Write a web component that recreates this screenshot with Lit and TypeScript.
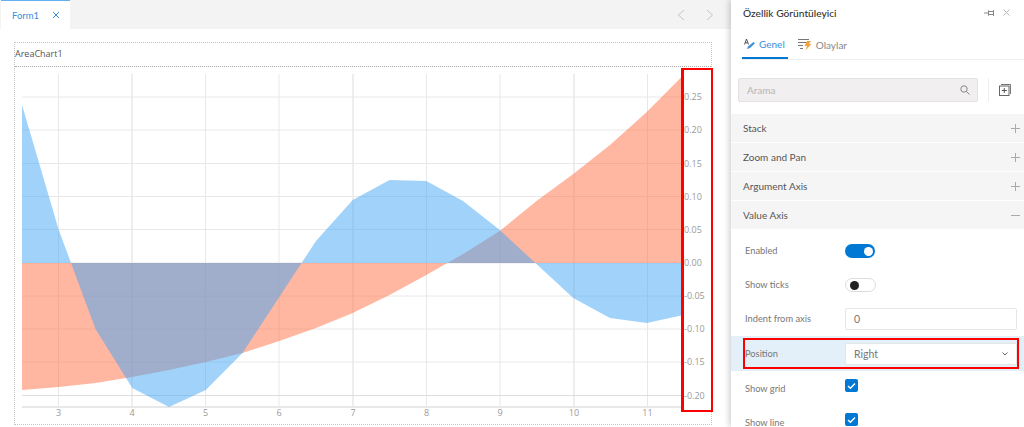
import { LitElement, html, svg, css } from 'lit';
import { customElement } from 'lit/decorators.js';

// page coordinates of the plot: x for 2.5, 3, 3.5 ... 11.5
const xs = Array.from({ length: 19 }, (_, i) => 22 + i * 36.75);
const blue = [105, 230, 329, 388, 407, 390, 353, 297, 241, 200, 180, 181, 201, 230, 264, 298, 318, 323, 315];
const orange = [390, 387, 383, 377, 370, 362, 353, 341, 328, 313, 295, 275, 254, 231, 201, 174, 145, 112, 75];
const baseY = 263;

const areaPoints = (ys: number[]) =>
  `22,${baseY} ` + ys.map((y, i) => `${xs[i]},${y}`).join(' ') + ` ${xs[18]},${baseY}`;

const gridX = [58.5, 132, 205.5, 279, 353, 426.5, 500, 574, 647.5];
const gridY = [97, 130, 163.5, 196.5, 229.5, 263, 296, 329, 362, 395.5];
const valueLabels = ['0.25', '0.20', '0.15', '0.10', '0.05', '0.00', '-0.05', '-0.10', '-0.15', '-0.20'];

@customElement('area-chart')
class AreaChart extends LitElement {
  static styles = css`
    :host {
      display: block;
    }

    svg {
      display: block;
    }

    text {
      font-family: 'Open Sans', sans-serif;
      font-size: 9px;
      fill: #9a9a9a;
    }
  `;

  render() {
    return html`<svg width="696" height="357" viewBox="15 67 696 357">
      ${gridX.map(
        (x, i) => svg`
          <line x1=${x} x2=${x} y1="74" y2="407" stroke="#e8e8e8" stroke-width=${i % 3 === 1 ? 1.5 : 1}></line>
          <text x=${x} y="416" text-anchor="middle">${i + 3}</text>
        `,
      )}
      ${gridY.map(
        (y, i) => svg`
          <line x1="22" x2="684" y1=${y} y2=${y} stroke=${i === 9 ? '#dedede' : '#e8e8e8'}></line>
          <text x="684" y=${y + 3}>${valueLabels[i]}</text>
        `,
      )}
      <line x1="22" x2="684" y1="407" y2="407" stroke="#e8e8e8" stroke-width="2"></line>
      <polygon points=${areaPoints(orange)} fill="#ff7043" fill-opacity="0.5"></polygon>
      <polygon points=${areaPoints(blue)} fill="#42a5f5" fill-opacity="0.5"></polygon>
    </svg>`;
  }
}

@customElement('app-root')
export default class AppRoot extends LitElement {
  static styles = css`
    :host {
      display: block;
      width: 1024px;
      height: 427px;
      overflow: hidden;
      font-family: Lato, 'Open Sans', sans-serif;
      color: #444;
    }

    .app {
      display: flex;
      height: 427px;
      position: relative;
    }

    .designer {
      width: 731px;
      flex: none;
      background: #fff;
    }

    .tabbar {
      display: flex;
      align-items: stretch;
      height: 29px;
      background: #f3f3f3;
      padding-left: 1px;
    }

    .tab {
      display: flex;
      align-items: center;
      gap: 13px;
      width: 69px;
      box-sizing: border-box;
      padding-left: 11px;
      background: #fff;
      border-top: 1px solid #64b0ef;
      font-size: 9.5px;
      color: #3a8ee0;
    }

    .pager {
      margin-left: auto;
      display: flex;
      gap: 21px;
      align-items: center;
      padding-right: 17px;
    }

    .frame {
      position: relative;
      width: 698px;
      height: 383px;
      margin: 13px 0 0 14px;
      box-sizing: border-box;
      border: 1px dotted #c4c4c4;
    }

    .frame-title {
      height: 24px;
      box-sizing: border-box;
      padding: 5px 0 0 0;
      border-bottom: 1px dotted #aaa;
      font-family: 'Open Sans', sans-serif;
      font-size: 9px;
      line-height: 12px;
      color: #555;
    }

    .axis-mark {
      position: absolute;
      left: 666px;
      top: 25px;
      width: 32px;
      height: 344px;
      box-sizing: border-box;
      border: 2px solid #f00;
      border-left-width: 3px;
    }

    .panel {
      flex: 1;
      min-width: 0;
      background: #fff;
      box-shadow: -2px 0 6px rgba(0, 0, 0, 0.18);
      position: relative;
    }

    .panel-head {
      display: flex;
      align-items: center;
      height: 25px;
      padding: 0 14px 0 12px;
      font-size: 10.2px;
      font-weight: 500;
      color: #333;
    }

    .panel-head .title {
      flex: 1;
    }

    .panel-head .tools {
      display: flex;
      gap: 8px;
      align-items: center;
    }

    .tabs {
      display: flex;
      gap: 8px;
      height: 35px;
      box-sizing: border-box;
      margin-left: 11px;
      border-bottom: 1px solid #eee;
    }

    .ptab {
      display: flex;
      align-items: center;
      gap: 3px;
      height: 34px;
      padding: 5px 3px 0 2px;
      font-size: 10px;
      color: #888;
      box-sizing: border-box;
    }

    .ptab + .ptab {
      gap: 4px;
    }

    .ptab.active {
      color: #3a8ee0;
      border-bottom: 2px solid #0078d4;
    }

    .search-row {
      display: flex;
      align-items: center;
      height: 24px;
      margin: 18px 0 12px 7px;
    }

    .search {
      display: flex;
      align-items: center;
      justify-content: space-between;
      width: 240px;
      height: 24px;
      box-sizing: border-box;
      padding: 0 7px 0 8px;
      background: #f1efef;
      border: 1px solid #e3e1e1;
      border-radius: 2px;
      font-size: 10px;
      color: #b5b5b5;
    }

    .search-sep {
      width: 1px;
      height: 24px;
      margin: 0 10px;
      background: #eee;
    }

    .section {
      display: flex;
      align-items: center;
      justify-content: space-between;
      height: 28px;
      margin-bottom: 1px;
      padding: 0 4px 0 12px;
      box-sizing: border-box;
      background: #f5f5f5;
      font-size: 10px;
      color: #555;
    }

    .rows {
      padding-top: 3px;
    }

    .row {
      display: grid;
      grid-template-columns: 100px 172px;
      align-items: center;
      height: 34px;
      padding-left: 14px;
      font-size: 9.3px;
      color: #777;
    }

    .row.tall {
      height: 35px;
    }

    .row.selected {
      position: relative;
      background: #e3eff9;
    }

    .row-mark {
      position: absolute;
      left: 12px;
      top: 2px;
      width: 276px;
      height: 31px;
      box-sizing: border-box;
      border: 2px solid #f00;
    }

    .toggle {
      display: flex;
      align-items: center;
      justify-content: flex-end;
      width: 30px;
      height: 14px;
      margin-top: 2px;
      box-sizing: border-box;
      padding: 0 2px;
      border-radius: 7px;
      background: #0078d4;
    }

    .toggle i {
      width: 9px;
      height: 9px;
      border-radius: 50%;
      background: #fff;
    }

    .toggle.off {
      justify-content: flex-start;
      width: 31px;
      padding: 0 4px;
      background: #fff;
      border: 1px solid #ddd;
    }

    .toggle.off i {
      background: #222;
    }

    .input {
      display: flex;
      align-items: center;
      justify-content: space-between;
      height: 22px;
      box-sizing: border-box;
      padding: 0 8px;
      background: #fff;
      border: 1px solid #e6e6e6;
      border-radius: 2px;
      font-size: 10.5px;
      color: #777;
    }

    .check {
      display: flex;
      align-items: center;
      justify-content: center;
      width: 13px;
      height: 13px;
      margin-top: -5px;
      border-radius: 2px;
      background: #0078d4;
    }
  `;

  private plus() {
    return html`<svg width="9" height="9" viewBox="0 0 9 9"><path d="M4.5 0v9M0 4.5h9" stroke="#aaa" fill="none"></path></svg>`;
  }

  private toggle(on: boolean) {
    return html`<div class="toggle ${on ? '' : 'off'}"><i></i></div>`;
  }

  private check() {
    return html`<div class="check">
      <svg width="9" height="8" viewBox="0 0 9 8"><path d="M1 4l2.4 2.2L8 1.5" stroke="#fff" stroke-width="1.4" fill="none"></path></svg>
    </div>`;
  }

  render() {
    return html`<div class="app">
      <div class="designer">
        <div class="tabbar">
          <div class="tab">
            Form1
            <svg width="8" height="8" viewBox="0 0 8 8"><path d="M1 1l6 6M7 1L1 7" stroke="#3a8ee0" fill="none"></path></svg>
          </div>
          <div class="pager">
            <svg width="8" height="12" viewBox="0 0 8 12"><path d="M7 1L1.5 6 7 11" stroke="#c4c4c4" fill="none"></path></svg>
            <svg width="8" height="12" viewBox="0 0 8 12"><path d="M1 1l5.500 5L1 11" stroke="#c4c4c4" fill="none"></path></svg>
          </div>
        </div>
        <div class="frame">
          <div class="frame-title">AreaChart1</div>
          <area-chart></area-chart>
          <div class="axis-mark"></div>
        </div>
      </div>
      <div class="panel">
        <div class="panel-head">
          <span class="title">Özellik Görüntüleyici</span>
          <span class="tools">
            <svg width="11" height="8" viewBox="0 0 11 8"><path d="M0 4h4M4 1.500h.5V6.500H4M4.500 2.500H9.500M4.500 5.500H9.500M9.500 1v6" stroke="#888" fill="none"></path></svg>
            <svg width="7" height="7" viewBox="0 0 7 7"><path d="M0.500 0.500l6 6M6.500 0.500l-6 6" stroke="#bbb" fill="none"></path></svg>
          </span>
        </div>
        <div class="tabs">
          <div class="ptab active">
            <svg width="12" height="12" viewBox="0 0 12 12">
              <path d="M0.500 6.500L2.500 1l2 5.500M1.200 4.800h2.600" stroke="#444" fill="none" stroke-width="0.9"></path>
              <path d="M3 11l1-2.500L9.500 4l1.500 1.300L6 10z" fill="#3a8ee0"></path>
            </svg>
            Genel
          </div>
          <div class="ptab">
            <svg width="14" height="13" viewBox="0 0 14 13">
              <path d="M0 1.500h11M0 4.500h9M0 7.500h5M2 10.500h3" stroke="#777" fill="none"></path>
              <path d="M9 3h4l-2 3h2.500L7.500 12.500 9 8H6.500z" fill="#f4a340"></path>
            </svg>
            Olaylar
          </div>
        </div>
        <div class="search-row">
          <div class="search">
            Arama
            <svg width="10" height="10" viewBox="0 0 10 10"><circle cx="4" cy="4" r="3.200" stroke="#888" fill="none"></circle><path d="M6.300 6.300L9.500 9.500" stroke="#888" fill="none"></path></svg>
          </div>
          <div class="search-sep"></div>
          <svg width="12" height="12" viewBox="0 0 12 12">
            <path d="M2 0.500h9.500V10" stroke="#777" fill="none"></path>
            <rect x="0.500" y="2" width="9.500" height="9.500" stroke="#666" fill="none"></rect>
            <path d="M5.250 4v5M2.800 6.500h5" stroke="#555" fill="none"></path>
          </svg>
        </div>
        <div class="section">Stack ${this.plus()}</div>
        <div class="section">Zoom and Pan ${this.plus()}</div>
        <div class="section">Argument Axis ${this.plus()}</div>
        <div class="section">
          Value Axis
          <svg width="9" height="9" viewBox="0 0 9 9"><path d="M0 4.500h9" stroke="#aaa" fill="none"></path></svg>
        </div>
        <div class="rows">
          <div class="row"><span>Enabled</span>${this.toggle(true)}</div>
          <div class="row"><span>Show ticks</span>${this.toggle(false)}</div>
          <div class="row tall"><span>Indent from axis</span><div class="input">0</div></div>
          <div class="row tall selected">
            <span>Position</span>
            <div class="input">
              Right
              <svg width="6" height="4" viewBox="0 0 6 4"><path d="M0.500 0.500L3 3l2.500-2.500" stroke="#666" fill="none"></path></svg>
            </div>
            <div class="row-mark"></div>
          </div>
          <div class="row"><span>Show grid</span>${this.check()}</div>
          <div class="row"><span>Show line</span>${this.check()}</div>
        </div>
      </div>
    </div>`;
  }
}
